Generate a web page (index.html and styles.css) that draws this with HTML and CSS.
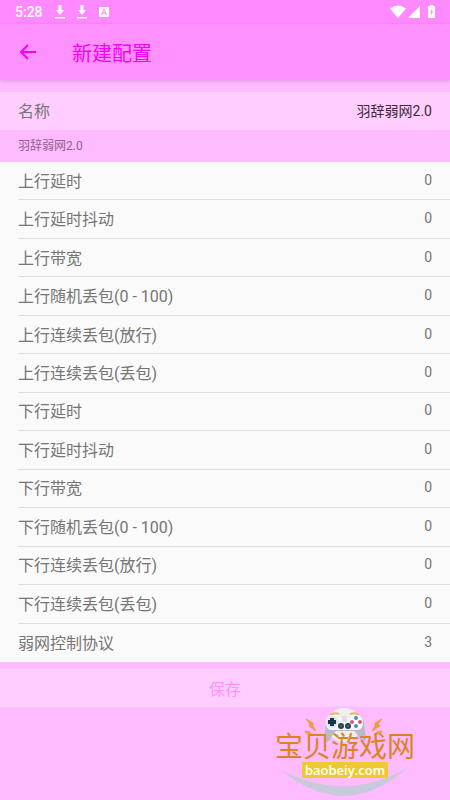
FILE: index.html
```html
<!DOCTYPE html>
<html lang="zh-CN">
<head>
<title>新建配置</title>
<meta charset="UTF-8">
<meta name="viewport" content="width=device-width, initial-scale=1">
<link rel="stylesheet" href="styles.css">
</head>
<body>

<div class="status">
  <span class="time">5:28</span>
  <svg class="down" width="10" height="16" viewBox="0 0 10 16"><path d="M3.500 1h3v5H9l-4 5-4-5h2.500zM0 13h10v1.500H0z"/></svg>
  <svg class="down" width="10" height="16" viewBox="0 0 10 16"><path d="M3.500 1h3v5H9l-4 5-4-5h2.500zM0 13h10v1.500H0z"/></svg>
  <svg width="10" height="12" viewBox="0 0 10 12"><path fill-rule="evenodd" d="M1 1h8q1 0 1 1v8q0 1-1 1H1q-1 0-1-1V2q0-1 1-1zM4.300 3L2 9h1.200l.5-1.400h2.600L6.800 9H8L5.700 3zM4 6.600l1-2.600 1 2.600z"/></svg>
  <span class="space"></span>
  <svg width="16" height="14" viewBox="0 0 16 14"><path d="M0 3.500Q8-2.500 16 3.500L8 13z"/></svg>
  <svg class="signal" width="12" height="14" viewBox="0 0 12 14"><path d="M12 1v12H0z"/></svg>
  <svg class="battery" width="7" height="14" viewBox="0 0 7 14"><path fill-rule="evenodd" d="M2 0h3v1h1q1 0 1 1v10q0 1-1 1H1q-1 0-1-1V2q0-1 1-1h1zM4.500 3L2 7.500h1.300L2.800 11 5.200 6.500H4z"/></svg>
</div>

<div class="header">
  <button class="back" type="button" aria-label="返回">
    <svg width="16" height="16" viewBox="0 0 16 16"><path d="M8 1L1 8l7 7M1 8h15"/></svg>
  </button>
  <h1>新建配置</h1>
</div>

<form class="config">
  <div class="name">
    <label for="name">名称</label>
    <input id="name" value="羽辞弱网2.0">
  </div>

  <h2>羽辞弱网2.0</h2>

  <div class="list">
    <div class="item"><label for="upDelay">上行延时</label><input id="upDelay" value="0"></div>
    <div class="item"><label for="upJitter">上行延时抖动</label><input id="upJitter" value="0"></div>
    <div class="item"><label for="upBand">上行带宽</label><input id="upBand" value="0"></div>
    <div class="item"><label for="upLoss">上行随机丢包(0 - 100)</label><input id="upLoss" value="0"></div>
    <div class="item"><label for="upPass">上行连续丢包(放行)</label><input id="upPass" value="0"></div>
    <div class="item"><label for="upDrop">上行连续丢包(丢包)</label><input id="upDrop" value="0"></div>
    <div class="item"><label for="downDelay">下行延时</label><input id="downDelay" value="0"></div>
    <div class="item"><label for="downJitter">下行延时抖动</label><input id="downJitter" value="0"></div>
    <div class="item"><label for="downBand">下行带宽</label><input id="downBand" value="0"></div>
    <div class="item"><label for="downLoss">下行随机丢包(0 - 100)</label><input id="downLoss" value="0"></div>
    <div class="item"><label for="downPass">下行连续丢包(放行)</label><input id="downPass" value="0"></div>
    <div class="item"><label for="downDrop">下行连续丢包(丢包)</label><input id="downDrop" value="0"></div>
    <div class="item"><label for="protocol">弱网控制协议</label><input id="protocol" value="3"></div>
  </div>

  <button class="save" type="submit" disabled>保存</button>
</form>

<!-- site mark -->
<div class="mark">
  <svg class="art" width="150" height="96" viewBox="0 0 150 96">
    <path d="M11 66Q75 119 137 64Q75 99 11 66z" fill="#c9c9dc"/>
    <ellipse cx="74" cy="21" rx="17" ry="17" fill="#efeff2"/>
    <path d="M60 11q5-3 9-1M80 10q5-2 9 1" stroke="#e8b85c" stroke-width="2" fill="none"/>
    <path d="M61 11h8l3 2h6l3-2h7q5 1 6 8l2 15q0 4-3 4-3-1-6-8l-3-3H66l-3 3q-3 7-6 8-3 0-3-4l2-15q1-7 5-8z" fill="#b9bac8"/>
    <path d="M61 11h8l3 2h6l3-2h7q5 1 5 8 0 6-5 7H61q-5-1-5-7 0-7 5-8z" fill="#f4f4f7"/>
    <path d="M72 12h5v6h-5z" fill="#dce1e9"/>
    <circle cx="62" cy="18" r="6" fill="#dfe6ed"/><circle cx="86" cy="18" r="6" fill="#fff"/>
    <path d="M60 14h4v2h2v4h-2v2h-4v-2h-2v-4h2z" fill="#17364a"/>
    <circle cx="86" cy="14" r="2" fill="#418dcb"/><circle cx="82" cy="18" r="2" fill="#dc5969"/><circle cx="90" cy="18" r="2" fill="#dc5969"/><circle cx="86" cy="22" r="2" fill="#418dcb"/>
    <circle cx="71" cy="22" r="3" fill="#293e50"/><circle cx="78" cy="22" r="3" fill="#293e50"/>
    <circle cx="71" cy="22" r="1" fill="#5f7484"/><circle cx="78" cy="22" r="1" fill="#5f7484"/>
    <path d="M36 15l7 4v3l3 5-7-5 1-2zM35 27l5 1 2 3-6-2zM112 15l-7 4v3l-3 5 8-5-2-2zM112 27l-5 1-3 3 7-2z" fill="#f49a43" stroke="#f49a43" stroke-width="1"/>
  </svg>
  <div class="words">
    <strong>宝贝游戏网</strong>
    <span>baobeiy.com</span>
  </div>
</div>

</body>
</html>
```

FILE: styles.css
```css
* {
  box-sizing: border-box;
}

body {
  margin: 0;
  position: relative;
  min-height: 100vh;
  overflow: hidden;
  background: #ffbbff;
  color: #757575;
  font-family: Roboto, "Noto Sans CJK SC", sans-serif;
}

button, input {
  border: none;
  background: none;
  padding: 0;
  font-family: inherit;
}

/* Status bar */
.status {
  display: flex;
  align-items: center;
  height: 24px;
  padding: 0 15px;
  background: #ff8aff;
  color: white;
}

.status svg {
  fill: white;
}

.time {
  font-size: 14px;
  font-weight: 500;
  margin-right: 12px;
}

.down {
  margin-right: 12px;
}

.space {
  flex: 1;
}

.signal {
  margin-left: 2px;
}

.battery {
  margin-left: 8px;
}

/* Title bar */
.header {
  position: relative;
  display: flex;
  align-items: center;
  height: 56px;
  padding-left: 20px;
  background: #ff91ff;
  color: #f400f4;
  box-shadow: 0 1px 4px rgba(90, 0, 90, 0.2);
}

.header h1 {
  margin: 0;
  font-size: 20px;
  font-weight: 400;
}

.back {
  display: flex;
  width: 52px;
  color: inherit;
}

.back svg {
  fill: none;
  stroke: currentColor;
  stroke-width: 2;
}

/* Form */
.config {
  padding-top: 12px;
}

.name, .item {
  display: flex;
  align-items: center;
  justify-content: space-between;
  padding-right: 18px;
  padding-bottom: 2px;
  font-size: 16px;
}

.name {
  height: 38px;
  padding-left: 18px;
  background: #ffceff;
}

.name input, .item input {
  width: 120px;
  color: inherit;
  font-size: 14px;
  text-align: right;
}

.name input {
  color: #3b293b;
}

.config h2 {
  margin: 0;
  padding-left: 18px;
  font-size: 12px;
  font-weight: 400;
  line-height: 32px;
  color: #8b648b;
}

.list {
  display: grid;
  grid-auto-rows: 1fr;
  min-height: 500px;
  padding-left: 18px;
  background: #fafafa;
}

.item {
  border-bottom: 1px solid #dedede;
}

.item:last-child {
  border-bottom: none;
}

.save {
  display: block;
  width: 100%;
  height: 38px;
  margin-top: 7px;
  background: #ffceff;
  color: #ff91ff;
  font-size: 16px;
}

/* Site mark in the corner */
.mark {
  position: absolute;
  right: 30px;
  bottom: 0;
  width: 150px;
  height: 96px;
}

.art {
  position: absolute;
  top: 0;
  left: 0;
}

.words {
  position: relative;
  display: flex;
  flex-direction: column;
  align-items: center;
  padding-top: 30px;
}

.words strong {
  color: #dc8422;
  font-size: 28px;
  font-weight: 400;
  line-height: 28px;
}

.words span {
  padding: 0 3px;
  background: #edcb2e;
  color: white;
  font-family: "Open Sans", "Noto Sans", sans-serif;
  font-size: 13px;
  font-weight: 600;
  line-height: 16px;
}
```
